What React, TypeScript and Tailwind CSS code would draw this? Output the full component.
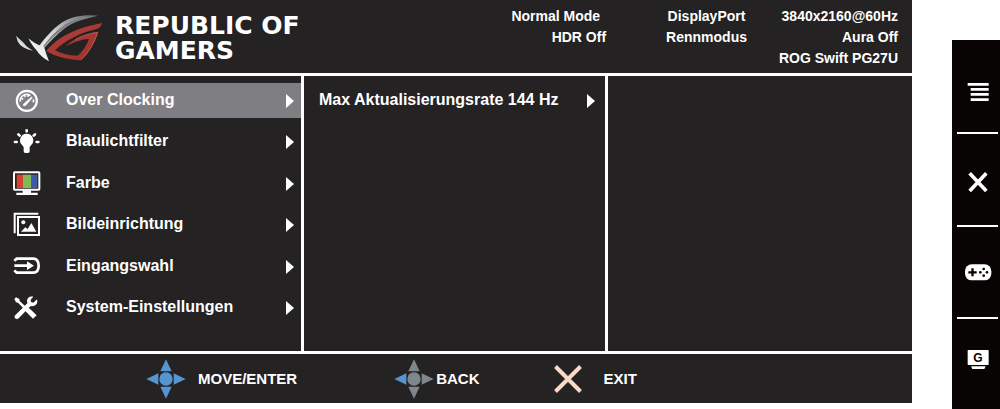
import type { ReactNode } from "react";

const menuItems: { label: string; icon: ReactNode }[] = [
  { label: "Over Clocking", icon: <GaugeIcon /> },
  { label: "Blaulichtfilter", icon: <BulbIcon /> },
  { label: "Farbe", icon: <ColorIcon /> },
  { label: "Bildeinrichtung", icon: <ImageIcon /> },
  { label: "Eingangswahl", icon: <InputIcon /> },
  { label: "System-Einstellungen", icon: <ToolsIcon /> },
];

const sideKeys: { label: string; icon: ReactNode }[] = [
  { label: "Menu", icon: <MenuKeyIcon /> },
  { label: "Close", icon: <CloseKeyIcon /> },
  { label: "GamePlus", icon: <GamePlusKeyIcon /> },
  { label: "GameVisual", icon: <GameVisualKeyIcon /> },
];

function RogLogo() {
  return (
    <svg viewBox="42 36 264 150" className="h-[50px] w-[88px] shrink-0" aria-hidden="true">
      <defs>
        <linearGradient id="steel" x1="0" y1="1" x2="1" y2="0">
          <stop offset="0" stopColor="#ffffff" />
          <stop offset="0.5" stopColor="#d0d2d3" />
          <stop offset="1" stopColor="#5c6062" />
        </linearGradient>
        <linearGradient id="red" x1="0" y1="0" x2="1" y2="1">
          <stop offset="0" stopColor="#b5403a" />
          <stop offset="1" stopColor="#9c2f2c" />
        </linearGradient>
      </defs>
      <path d="M45 104C56 115 64 120 71 129C77 138 85 141 96 149C72 145 58 136 50 121Z" fill="url(#steel)" />
      <path
        d="M82 112C96 122 106 131 116 133C128 116 154 84 184 64C210 47 246 40 292 44C250 53 218 61 192 81C168 99 148 121 130 140C134 154 139 168 144 181C128 172 114 160 106 147C97 138 88 125 82 112Z"
        fill="url(#steel)"
      />
      <path d="M126 136C146 110 168 86 194 69C220 55 250 48 286 46C245 54 213 64 189 82C165 100 146 120 130 138Z" fill="#7b8082" />
      <path
        fillRule="evenodd"
        d="M136 150C163 116 210 84 303 66C301 74 299 79 288 84C240 94 193 118 162 148C181 158 205 164 230 164C245 152 257 134 264 114C238 116 220 124 194 135C222 110 256 98 292 92C283 121 267 155 240 178C199 175 164 167 136 150Z"
        fill="url(#red)"
      />
      <path d="M222 116C244 103 266 97 290 94C281 122 264 154 240 176" fill="none" stroke="#c9827c" strokeWidth="1.500" />
    </svg>
  );
}

function GaugeIcon() {
  return (
    <svg viewBox="0 0 84 72" className="h-6 w-7 overflow-visible" fill="none" stroke="#fff" aria-hidden="true">
      <circle cx="41.5" cy="35.5" r="30" strokeWidth="6.500" />
      <path d="M22 38A19 19 0 0 1 52 20M61 31A19 19 0 0 1 61 40" strokeWidth="5" />
      <path d="M24 27L31 31M34 17L37 25M46 16L45 24" strokeWidth="4" />
      <path d="M31 50L32 45L56 24L58 26L37 50Z" fill="#fff" strokeWidth="2" />
    </svg>
  );
}

function BulbIcon() {
  return (
    <svg viewBox="0 0 84 72" className="h-6 w-7 overflow-visible" aria-hidden="true">
      <path d="M41 11A20 20 0 0 1 54 46L50 52V64Q50 69 45 69H37Q32 69 32 64V52L28 46A20 20 0 0 1 41 11Z" fill="#fff" />
      <path d="M41 1V4M16 13L20 17M66 13L62 17M6 36H11M71 36H76" stroke="#fff" strokeWidth="8" strokeLinecap="round" />
    </svg>
  );
}

function ColorIcon() {
  return (
    <svg viewBox="0 0 84 72" className="h-6 w-7 overflow-visible" aria-hidden="true">
      <rect x="3" y="1" width="76" height="52" rx="2" fill="#232122" stroke="#fff" strokeWidth="6" />
      <rect x="11" y="8" width="19" height="40" fill="#d8402f" />
      <rect x="30" y="8" width="24" height="40" fill="#83b955" />
      <rect x="54" y="8" width="19" height="40" fill="#3c5ba8" />
      <path d="M29 55H54V62H74V69H10V62H29Z" fill="#fff" />
    </svg>
  );
}

function ImageIcon() {
  return (
    <svg viewBox="0 0 84 72" className="h-6 w-7 overflow-visible" aria-hidden="true">
      <path d="M5 61V2H76" fill="none" stroke="#fff" strokeWidth="6" />
      <rect x="15" y="12" width="63" height="54" fill="none" stroke="#fff" strokeWidth="6" />
      <circle cx="31" cy="28" r="6" fill="#fff" />
      <path d="M24 56L37 43L44 48L55 30L70 56Z" fill="#fff" />
    </svg>
  );
}

function InputIcon() {
  return (
    <svg viewBox="0 0 84 72" className="h-6 w-7 overflow-visible" aria-hidden="true">
      <path d="M4 17L11 11H62Q77 13 77 32Q77 51 62 53H11L4 46" fill="none" stroke="#fff" strokeWidth="8" />
      <path d="M4 28H42V19L63 32L42 45V36H4Z" fill="#fff" />
    </svg>
  );
}

function ToolsIcon() {
  return (
    <svg viewBox="0 0 84 72" className="h-6 w-7 overflow-visible" aria-hidden="true">
      <path d="M4 9L9 4L19 9L20 15L37 31L31 37L15 20L9 19Z" fill="#fff" />
      <path d="M43 36L49 37L71 58L60 68L39 47L37 42Z" fill="#fff" />
      <path
        d="M61 2C51 -1 42 6 42 15L43 22L5 59Q3 65 8 68Q13 71 17 67L53 30C64 33 73 26 73 16L72 10L61 20L54 18L53 11Z"
        fill="#fff"
      />
    </svg>
  );
}

function Arrow() {
  return (
    <svg viewBox="0 0 8 14" className="h-[14px] w-2 shrink-0" aria-hidden="true">
      <path d="M0 0L8 7L0 14Z" fill="#fff" />
    </svg>
  );
}

function DPad({ color, left }: { color: string; left: string }) {
  return (
    <svg viewBox="0 0 120 120" className="size-10 shrink-0" fill={color} aria-hidden="true">
      <path d="M60 1L77 37H43Z" />
      <path d="M60 119L77 83H43Z" />
      <path d="M119 60L83 43V77Z" />
      <path d="M1 60L37 43V77Z" fill={left} />
      <circle cx="60" cy="60" r="20" />
    </svg>
  );
}

function MenuKeyIcon() {
  return (
    <svg viewBox="0 0 120 120" className="size-10" fill="#fff" aria-hidden="true">
      <path d="M29 48H92V56H29ZM38 63H92V71H38ZM38 78H92V86H38ZM38 94H92V102H38Z" />
    </svg>
  );
}

function CloseKeyIcon() {
  return (
    <svg viewBox="0 0 120 120" className="size-10" aria-hidden="true">
      <path d="M35 43L85 96M85 43L35 96" stroke="#fff" strokeWidth="11" />
    </svg>
  );
}

function GamePlusKeyIcon() {
  return (
    <svg viewBox="0 0 120 120" className="size-10" aria-hidden="true">
      <rect x="21" y="37" width="79" height="48" rx="20" fill="#fff" />
      <path d="M31 61H56M43.500 49V73" stroke="#080404" strokeWidth="7" />
      <g fill="#080404">
        <circle cx="77" cy="51" r="4" />
        <circle cx="77" cy="71" r="4" />
        <circle cx="67" cy="61" r="4" />
        <circle cx="87" cy="61" r="4" />
      </g>
    </svg>
  );
}

function GameVisualKeyIcon() {
  return (
    <svg viewBox="0 0 120 120" className="size-10" aria-hidden="true">
      <rect x="29" y="18" width="63" height="45" rx="2" fill="#fff" />
      <path d="M39 67H83L79 75H43Z" fill="#fff" />
      <text x="60" y="54" textAnchor="middle" fontSize="36" fontWeight="700" fill="#080404">
        G
      </text>
    </svg>
  );
}

export default function App() {
  return (
    <div className="flex min-h-screen bg-white font-['Liberation_Sans',Arial,sans-serif] font-bold text-white">
      {/* OSD panel */}
      <main className="mr-10 mb-[6px] flex flex-1 flex-col bg-[#242223]">
        <header className="flex h-[76px] items-start justify-between border-b-[3px] border-white pr-[14px] pl-[15px]">
          <div className="flex items-start gap-3 pt-[13px]">
            <RogLogo />
            <h1 className="font-['DejaVu_Sans',sans-serif] text-[25px] leading-[25px] whitespace-nowrap">
              REPUBLIC OF
              <br />
              GAMERS
            </h1>
          </div>
          <div className="flex pt-[6px] text-[14px] leading-[21px] whitespace-nowrap">
            <div className="mr-[60px] text-right">
              <p className="pr-[6px]">Normal Mode</p>
              <p>HDR Off</p>
            </div>
            <div className="mr-8 text-center">
              <p>DisplayPort</p>
              <p>Rennmodus</p>
            </div>
            <div className="text-right">
              <p>3840x2160@60Hz</p>
              <p>Aura Off</p>
              <p>ROG Swift PG27U</p>
            </div>
          </div>
        </header>

        <div className="grid flex-1 grid-cols-3">
          <nav className="flex flex-col justify-between border-r-[3px] border-white pt-[7px] pb-[25px]">
            {menuItems.map((item, i) => (
              <button
                key={item.label}
                type="button"
                className={`flex h-[35px] items-center pr-[7px] pl-[13px] text-left ${i === 0 ? "bg-[#7f7e82]" : ""}`}
              >
                {item.icon}
                <span className="ml-[25px] flex-1 pb-[2px] text-[16px] leading-5">{item.label}</span>
                <Arrow />
              </button>
            ))}
          </nav>
          <div className="border-r-[3px] border-white pt-[7px]">
            <button type="button" className="flex h-[35px] w-full items-center pr-[10px] pl-[15px] text-left">
              <span className="flex-1 pb-[2px] text-[16px] leading-5">Max Aktualisierungsrate 144 Hz</span>
              <Arrow />
            </button>
          </div>
          <div />
        </div>

        <footer className="flex h-[52px] items-center border-t-[3px] border-white pl-[146px] text-[15px] leading-5">
          <div className="mr-[97px] flex items-center gap-3">
            <DPad color="#5695d2" left="#5695d2" />
            <span>MOVE/ENTER</span>
          </div>
          <div className="mr-[74px] flex items-center gap-[2px]">
            <DPad color="#7d878c" left="#5695d2" />
            <span>BACK</span>
          </div>
          <div className="flex items-center gap-[22px]">
            <svg viewBox="0 0 28 28" className="size-7" aria-hidden="true">
              <path d="M1.500 1.500L26.500 26.500M26.500 1.500L1.500 26.500" stroke="#fad9c8" strokeWidth="4" />
            </svg>
            <span>EXIT</span>
          </div>
        </footer>
      </main>

      {/* Hardware keys */}
      <aside className="mt-10 flex w-12 flex-col bg-[#080404] pt-[2px] pr-[2px] pl-[5px]">
        {sideKeys.map((key, i) => (
          <button
            key={key.label}
            type="button"
            aria-label={key.label}
            className={`flex flex-1 items-center justify-center ${i > 0 ? "border-t-2 border-white" : ""}`}
          >
            {key.icon}
          </button>
        ))}
      </aside>
    </div>
  );
}
